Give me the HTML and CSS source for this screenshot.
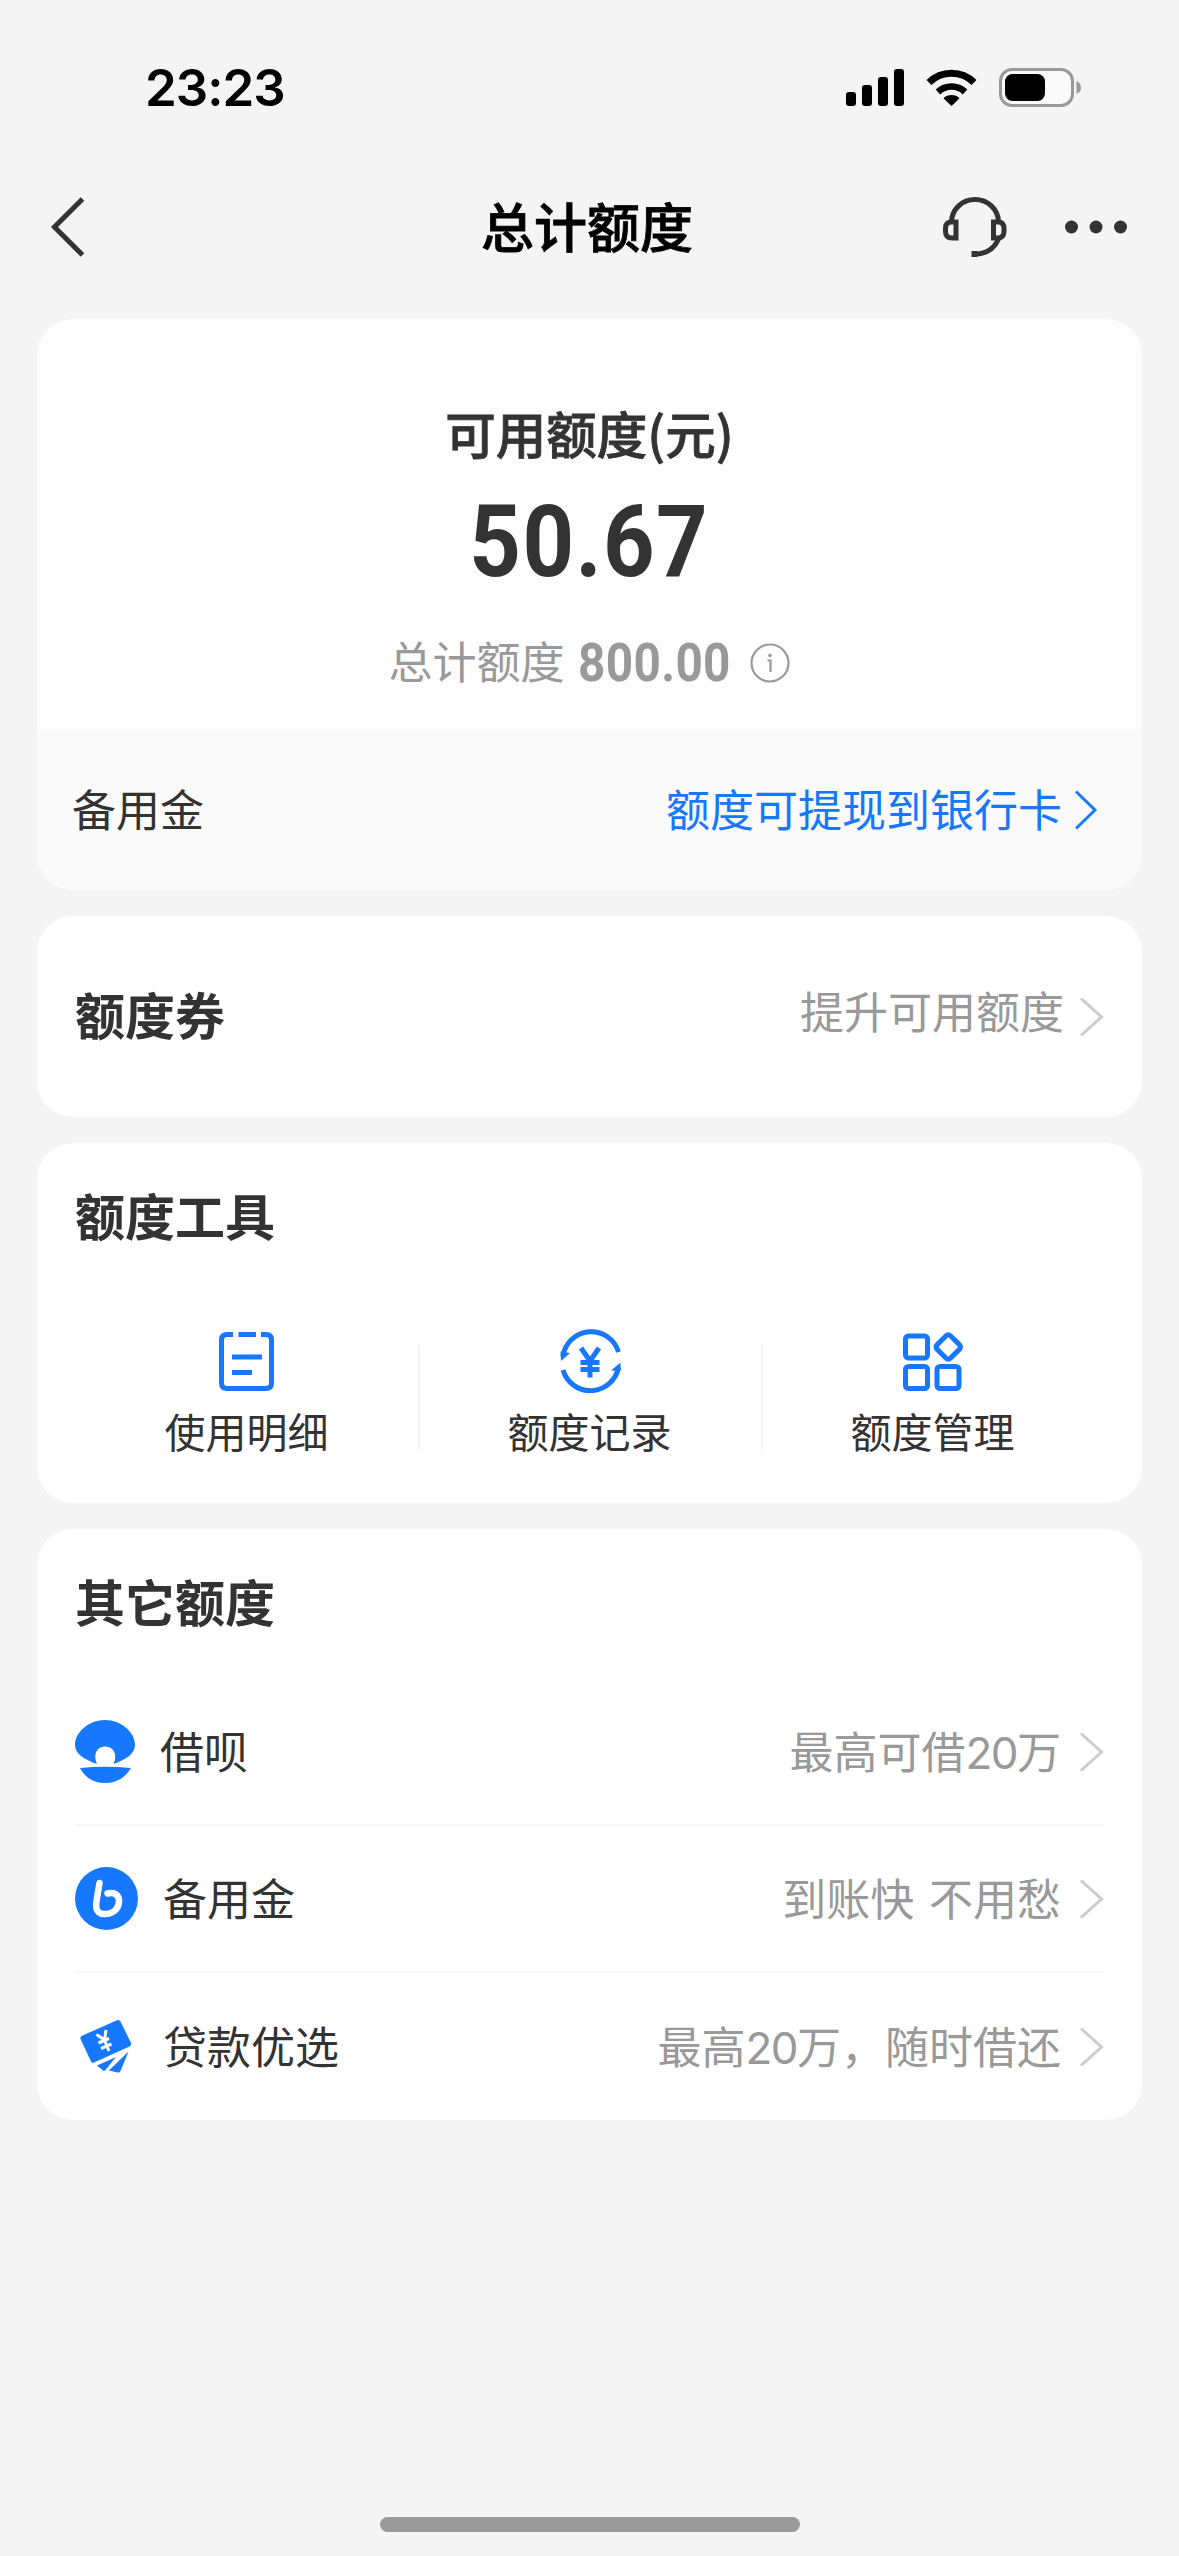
FILE: index.html
```html
<!DOCTYPE html>
<html lang="zh-CN">
<head>
<meta charset="utf-8">
<title>总计额度</title>
<link rel="stylesheet" href="styles.css">
</head>
<body>
<header class="status">
  <span class="time">23:23</span>
  <svg class="status-icons" viewBox="0 0 240 44" width="240" height="44">
    <rect x="1" y="26" width="10" height="14" rx="3"/>
    <rect x="17" y="19" width="10" height="21" rx="3"/>
    <rect x="33" y="11" width="10" height="29" rx="3"/>
    <rect x="49" y="3" width="10" height="37" rx="3"/>
    <path d="M106.500 40 L98.500 32.200 A11.500 11.500 0 0 1 114.500 32.200 Z"/>
    <path d="M93 26 A19.500 19.500 0 0 1 120 26" fill="none" stroke="#000" stroke-width="6.600"/>
    <path d="M84 16.500 A32 32 0 0 1 129 16.500" fill="none" stroke="#000" stroke-width="7"/>
    <rect x="155.500" y="3.500" width="72" height="36" rx="11.500" fill="#fafafa" stroke="#999" stroke-width="3"/>
    <rect x="160" y="8" width="40" height="27" rx="7.500"/>
    <path d="M231.500 15 q4.500 2 4.500 6.500 t-4.500 6.500 z" fill="#999"/>
  </svg>
</header>
<nav class="navbar">
  <svg class="back" viewBox="0 0 40 60" width="40" height="60"><path d="M35.500 2 L7.500 30 L35.500 58" class="line"/></svg>
  <h1>总计额度</h1>
  <div class="nav-actions">
    <svg viewBox="0 0 66 62" width="66" height="62">
      <path class="line" d="M8.500 26 A23.500 22.500 0 0 1 55.500 26"/>
      <path class="line" d="M13 26 V42 H9 Q2.500 42 2.500 35.500 V32.500 Q2.500 26 8.500 26 Z"/>
      <path class="line" d="M50.500 26 V42 H54.500 Q61 42 61 35.500 V32.500 Q61 26 55 26 Z"/>
      <path class="line" d="M55.500 43 Q49 58 31 58.300"/>
      <rect x="28.500" y="55" width="6" height="6" fill="#333"/>
    </svg>
    <svg viewBox="0 0 62 14" width="62" height="14" fill="#333"><circle cx="6.500" cy="7" r="6.500"/><circle cx="31" cy="7" r="6.500"/><circle cx="55.500" cy="7" r="6.500"/></svg>
  </div>
</nav>
<main>
  <section class="card summary">
    <h2>可用额度(元)</h2>
    <div class="amount">50.67</div>
    <div class="total"><span>总计额度</span><b>800.00</b>
      <svg viewBox="0 0 40 40" width="40" height="40"><circle cx="20" cy="20" r="18.500" fill="none" stroke="#999" stroke-width="2.200"/><circle cx="20" cy="12.500" r="1.800" fill="#999"/><path d="M17.500 17.500 H20.500 V29" fill="none" stroke="#999" stroke-width="2.200"/></svg>
    </div>
    <div class="reserve">
      <span>备用金</span>
      <a><span>额度可提现到银行卡</span><svg viewBox="0 0 24 40" width="24" height="40"><path d="M2 1.500 L21 20 L2 38.500" fill="none" stroke="#1677ff" stroke-width="3"/></svg></a>
    </div>
  </section>
  <section class="card coupon">
    <h3>额度券</h3>
    <div class="more"><span>提升可用额度</span><svg class="chev" viewBox="0 0 24 40" width="24" height="40"><path d="M1 1.500 L21.500 20 L1 38.500"/></svg></div>
  </section>
  <section class="card tools">
    <h3>额度工具</h3>
    <div class="grid">
      <div class="tool">
        <svg viewBox="0 0 64 64" width="64" height="64" class="blue"><path d="M18 5.500 H12 Q6.500 5.500 6.500 11 V54 Q6.500 59.500 12 59.500 H51 Q56.500 59.500 56.500 54 V11 Q56.500 5.500 51 5.500 H46 M23.500 5.500 H41 M17 28 H47 M17 43.500 H37"/></svg>
        <span>使用明细</span>
      </div>
      <div class="tool">
        <svg viewBox="0 0 64 64" width="64" height="64" class="blue"><path d="M5 27 A28.500 28.500 0 0 1 60.500 23 M60.500 38 A28.500 28.500 0 0 1 5 41"/><path class="solid" d="M2.500 22.500 L12 24 L3 32 Z M62.500 33.500 L62.500 42 L53 41.500 Z"/><path d="M23 19 L32 32 L41 19 M32 32 V48.500 M22.500 33.500 H41.500 M22.500 40.500 H41.500"/></svg>
        <span>额度记录</span>
      </div>
      <div class="tool">
        <svg viewBox="0 0 64 64" width="64" height="64" class="blue"><rect x="4.500" y="7" width="22" height="22" rx="3"/><rect x="4.500" y="37.500" width="22" height="22" rx="3"/><rect x="36" y="37.500" width="22" height="22" rx="3"/><rect x="37.750" y="8.500" width="19" height="19" rx="3" transform="rotate(45 47.250 18)"/></svg>
        <span>额度管理</span>
      </div>
    </div>
  </section>
  <section class="card others">
    <h3>其它额度</h3>
    <div class="row">
      <svg class="logo" viewBox="0 0 64 64" width="64" height="64" fill="#1677ff"><path d="M22 44 C10 40 0 34 0 25 C0 12 14 0 30 0 S60 12 60 25 C60 34 50 40 38.500 44 C43 34 38 26.500 30.200 26.500 S17.500 34 22 44 Z M5 48 Q30 45.500 56 48 Q47 63 30 63 T5 48 Z"/></svg>
      <span class="name short">借呗</span><span class="desc">最高可借<span class="num">20</span>万</span><svg class="chev" viewBox="0 0 24 40" width="24" height="40"><path d="M1 1.500 L21.500 20 L1 38.500"/></svg>
    </div>
    <div class="row">
      <svg class="logo" viewBox="0 0 64 64" width="64" height="64"><circle cx="31.500" cy="31.500" r="31.500" fill="#1677ff"/><path d="M24.500 16 L21.500 34 C19.500 46 26 47.500 30.500 47 C40 46.500 44.500 40 44 33 C43 26.500 38 25 32.500 26.500" fill="none" stroke="#fff" stroke-width="6.500" stroke-linecap="round"/></svg>
      <span class="name">备用金</span><span class="desc">到账快 不用愁</span><svg class="chev" viewBox="0 0 24 40" width="24" height="40"><path d="M1 1.500 L21.500 20 L1 38.500"/></svg>
    </div>
    <div class="row">
      <svg class="logo" viewBox="0 0 64 64" width="64" height="64" fill="#1677ff"><path d="M6.500 21 L42.500 5 Q44.500 4.500 45.500 6.500 L56 28 Q57 30 54.500 31.500 L19 47.500 Q17 48.500 16 46.500 L5.500 24 Q5 22 6.500 21 Z"/><path d="M22 50.500 L41 42 L30 55.500 Q29 56 28 55.500 Z M34 55.500 L53.500 36.500 L45.500 56 Q44.500 58 42.500 57.500 Z"/><path d="M21.500 19.500 L29.500 25 L31 15 M29.500 25 L34 36 M23.500 28 L34 23.500 M26 33.500 L36.500 29" fill="none" stroke="#fff" stroke-width="3"/></svg>
      <span class="name">贷款优选</span><span class="desc">最高<span class="num">20</span>万，随时借还</span><svg class="chev" viewBox="0 0 24 40" width="24" height="40"><path d="M1 1.500 L21.500 20 L1 38.500"/></svg>
    </div>
  </section>
</main>
<footer><div class="home"></div></footer>
</body>
</html>
```
FILE: styles.css
```css
* { box-sizing: border-box; }
body {
  margin: 0;
  width: 1179px;
  height: 2556px;
  display: flex;
  flex-direction: column;
  background: #f4f4f4;
  color: #333;
  font-family: "Noto Sans CJK SC", sans-serif;
}
h1, h2, h3 { margin: 0; }
svg { display: block; flex: none; }
.line { fill: none; stroke: #333; stroke-width: 5; }

.status {
  height: 160px;
  padding: 66px 94px 0 145px;
  display: flex;
  justify-content: space-between;
  align-items: flex-start;
}
.time {
  font: 600 51px/44px "Inter", sans-serif;
  color: #000;
  letter-spacing: -1px;
}
.navbar {
  height: 134px;
  padding: 0 52px 0 47px;
  display: grid;
  grid-template-columns: 1fr auto 1fr;
  align-items: center;
}
.navbar h1 {
  padding-bottom: 5px;
  font-size: 53px;
  line-height: 60px;
  font-weight: 500;
  color: #000;
  -webkit-text-stroke: 0.8px #000;
}
.nav-actions { display: flex; align-items: center; justify-content: flex-end; gap: 56px; }

main { padding: 25px 37px 0; display: flex; flex-direction: column; gap: 26px; }
.card { background: #fff; border-radius: 36px; }

.summary {
  height: 571px;
  background: #fdfdfd;
  overflow: hidden;
  display: flex;
  flex-direction: column;
  align-items: center;
}
.summary h2 {
  margin-top: 83px;
  font-size: 50.5px;
  line-height: 60px;
  font-weight: 500;
  -webkit-text-stroke: 0.8px #333;
}
.amount {
  margin-top: 34px;
  font: 700 100px/92px "Roboto", sans-serif;
  letter-spacing: 1.6px;
  transform: scaleX(0.9);
}
.total {
  margin-top: 45px;
  height: 60px;
  display: flex;
  align-items: center;
  color: #999;
  font-size: 44px;
  line-height: 60px;
}
.total span { padding-bottom: 6px; }
.total b {
  margin: 0 -17px 0 13px;
  font: 700 53px/60px "Roboto", sans-serif;
  letter-spacing: 0.4px;
  transform: scaleX(0.9);
  transform-origin: left center;
}
.total svg { margin-left: 20px; }
.reserve {
  margin-top: auto;
  width: 100%;
  height: 160px;
  padding: 0 44px 0 35px;
  background: #fafafa;
  display: flex;
  align-items: center;
  justify-content: space-between;
  font-size: 44px;
}
.reserve span { padding-bottom: 5px; }
.reserve a { display: flex; align-items: center; gap: 12px; color: #1677ff; }

h3 { font-size: 50px; line-height: 60px; font-weight: 700; }
.chev { fill: none; stroke: #ccc; stroke-width: 3; }
.coupon {
  height: 201px;
  padding: 0 38px;
  display: flex;
  align-items: center;
  justify-content: space-between;
}
.coupon h3 { padding-bottom: 8px; }
.more { display: flex; align-items: center; gap: 16px; color: #999; font-size: 44px; }
.more span { padding-bottom: 13px; }

.tools { height: 360px; padding: 41px 38px 0; }
.grid { margin-top: 86px; display: grid; grid-template-columns: repeat(3, 343px); }
.tool {
  height: 130px;
  display: flex;
  flex-direction: column;
  align-items: center;
  gap: 6px;
  font-size: 41px;
  line-height: 60px;
}
.tool svg { position: relative; top: -1px; }
.tool + .tool {
  background: linear-gradient(#f2f2f2, #f2f2f2) no-repeat left 15px / 2px 104px;
}
.blue { fill: none; stroke: #1677ff; stroke-width: 5; }
.blue .solid { fill: #1677ff; stroke: none; }

.others { height: 591px; padding: 41px 38px 0; }
.others h3 { margin-bottom: 49px; }
.row { height: 147px; display: flex; align-items: center; font-size: 44px; border-bottom: 2px solid #f7f7f7; }
.row:last-child { border-bottom: 0; }
.name { margin-left: 24px; padding-bottom: 4px; }
.name.short { margin-left: 21px; }
.desc { margin-left: auto; margin-right: 19px; padding-bottom: 4px; color: #999; word-spacing: 5px; }
.num { font-family: "Inter", sans-serif; line-height: 1; letter-spacing: -1.5px; }

footer { margin-top: auto; padding: 0 0 24px 380px; }
.home { width: 420px; height: 15px; border-radius: 8px; background: #9a9a9a; }
```
